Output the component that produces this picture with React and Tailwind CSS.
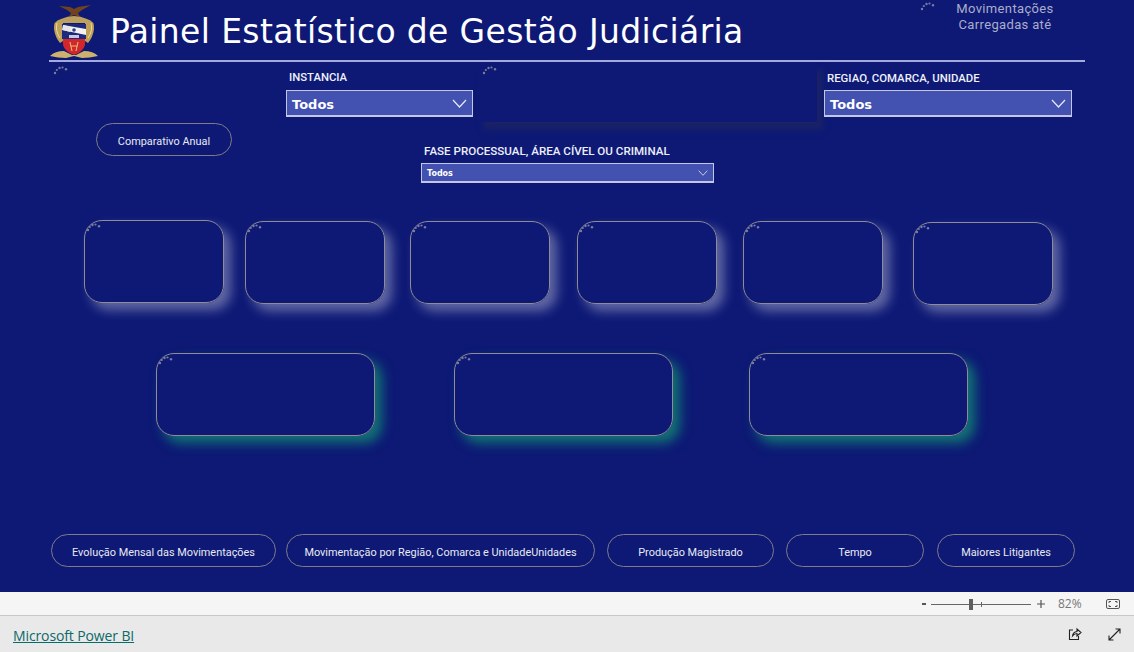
const labelFont = "font-['Roboto',sans-serif]";

function Spinner({ className = "" }) {
  return (
    <svg width="16" height="10" viewBox="0 0 16 10" className={className}>
      <g fill="#7a7c9e">
        <circle cx="2" cy="8" r="1.2" />
        <circle cx="3.8" cy="5" r="1.1" />
        <circle cx="6.5" cy="3" r="1.2" />
        <circle cx="9.5" cy="2.5" r="1.1" />
        <circle cx="13" cy="4.2" r="1.2" />
      </g>
    </svg>
  );
}

function Logo() {
  return (
    <svg width="48" height="54" viewBox="0 0 48 54" className="shrink-0">
      <path d="M9 1 L20 2 L24 4 L28 2 L41 0 L32 5 L28 8 L30 12 L24 10 L19 12 L21 8 L17 5 Z" fill="#70431f" />
      <path d="M11 14 Q24 8 37 14 Q45 16 44 24 Q43 32 38 38 L35 36 L35 18 L13 18 L13 36 L10 38 Q5 32 4 24 Q3 16 11 14 Z" fill="#bda05c" />
      <path d="M7 18 Q5 26 10 33 M41 18 Q43 26 38 33" stroke="#f0d98c" strokeWidth="1" fill="none" />
      <rect x="12" y="19" width="24" height="15" fill="#1d2a7c" />
      <path d="M13 20 L36 24 L36 30 L12 25 Z" fill="#f4f1ee" />
      <path d="M13 20 L20 21.5 L20 27 L13 25 Z" fill="#e8e4e4" />
      <circle cx="24" cy="25" r="1.8" fill="#27408f" />
      <rect x="19" y="30" width="10" height="3" fill="#c7c9e0" />
      <path d="M13 34 H35 V40 Q33 47 24 50 Q15 47 13 40 Z" fill="#d3262c" />
      <path d="M20 37 L22 46 M28 37 L26 46 M21 41 H27" stroke="#e0bd72" strokeWidth="1.1" fill="none" />
      <path d="M0 51 Q5 46 14 46 L22 50 L26 50 L34 46 Q43 46 48 51 Q39 53 32 53 L24 51 L16 53 Q8 53 0 51 Z" fill="#cdb26d" />
    </svg>
  );
}

function Select({ width, height, text, textClass, chevron }) {
  return (
    <div className={`${width} ${height} flex items-center justify-between bg-[#4351b0] border border-[#c3c7e4] border-b-2 pl-[5px] pr-[5px]`}>
      <span className={`${textClass} font-['DejaVu_Sans',sans-serif] font-bold text-white pt-[3px]`}>{text}</span>
      <svg width={chevron} height={chevron * 0.6} viewBox="0 0 15 9" fill="none" stroke="#e6e8f6" strokeWidth="1.2">
        <path d="M1 1 L7.5 8 L14 1" />
      </svg>
    </div>
  );
}

function Card({ width, margin, shadow }) {
  return (
    <div className={`${width} ${margin} ${shadow} h-[83px] shrink-0 rounded-[18px] border border-[#8f8c97] pl-[1px] pt-[1px]`}>
      <Spinner />
    </div>
  );
}

function PillButton({ width, margin = "", children }) {
  return (
    <div className={`${width} ${margin} h-[33px] shrink-0 flex items-center justify-center rounded-full border border-[#7f7c88] pt-[6px] text-[10.9px] text-[#e8e9f4] ${labelFont}`}>
      {children}
    </div>
  );
}

const lightShadow = "shadow-[7px_7px_12px_rgba(205,205,225,0.45)]";
const tealShadow = "shadow-[7px_7px_12px_rgba(20,150,115,0.72)]";

export default function App() {
  return (
    <div className="w-[1134px] h-[652px] overflow-hidden flex flex-col">
      <div className="h-[592px] bg-[#0d1975] flex flex-col shrink-0">
        {/* header */}
        <div className="ml-[49px] w-[1036px] h-[62px] border-b-2 border-[#a4aae0] flex shrink-0">
          <div className="mt-[5px] ml-[1px]"><Logo /></div>
          <h1 className="ml-[12px] mt-[9px] text-[33px] leading-[46px] tracking-[0.35px] text-white font-['DejaVu_Sans',sans-serif] whitespace-nowrap">
            Painel Estatístico de Gestão Judiciária
          </h1>
          <div className="ml-auto flex mr-[30px]">
            <Spinner className="mt-[1px] mr-[19px]" />
            <div className={`w-[100px] text-center text-[13px] leading-[16px] tracking-[0.35px] text-[#abadcc] pt-[1px] ${labelFont}`}>
              Movimentações<br />Carregadas até
            </div>
          </div>
        </div>

        {/* filters */}
        <div className="flex h-[121px] shrink-0">
          <div className="w-[286px] shrink-0 flex flex-col">
            <Spinner className="ml-[53px] mt-[3px]" />
            <div className="ml-[96px] mt-[48px]">
              <PillButton width="w-[136px]">Comparativo Anual</PillButton>
            </div>
          </div>
          <div className="flex flex-col">
            <div className="flex h-[81px]">
              <div className="w-[187px]">
                <div className={`ml-[3px] mt-[8px] h-[20px] pt-[1px] text-[11.3px] leading-[14px] font-medium text-[#eef0fa] ${labelFont}`}>INSTANCIA</div>
                <Select width="w-[187px]" height="h-[27px]" text="Todos" textClass="text-[13px]" chevron={15} />
              </div>
              <div className="ml-[4px] w-[340px] h-[60px] pl-[5px] pt-[3px] shadow-[6px_8px_6px_#1a2268]">
                <Spinner />
              </div>
              <div className="ml-[7px] w-[248px]">
                <div className={`ml-[3px] mt-[8px] h-[20px] pt-[1px] text-[11.4px] leading-[14px] font-medium text-[#eef0fa] whitespace-nowrap ${labelFont}`}>REGIAO, COMARCA, UNIDADE</div>
                <Select width="w-[248px]" height="h-[27px]" text="Todos" textClass="text-[13px]" chevron={15} />
              </div>
            </div>
            <div className="ml-[135px]">
              <div className={`ml-[3px] h-[20px] text-[11.6px] leading-[14px] pt-[1px] font-medium text-[#eef0fa] whitespace-nowrap ${labelFont}`}>FASE PROCESSUAL, ÁREA CÍVEL OU CRIMINAL</div>
              <Select width="w-[293px]" height="h-[20px]" text="Todos" textClass="text-[8px]" chevron={10} />
            </div>
          </div>
        </div>

        {/* cards first row */}
        <div className="flex items-start mt-[37px] h-[133px] shrink-0">
          <Card width="w-[140px]" margin="ml-[84px]" shadow={lightShadow} />
          <Card width="w-[140px]" margin="ml-[21px] mt-[1px]" shadow={lightShadow} />
          <Card width="w-[140px]" margin="ml-[25px] mt-[1px]" shadow={lightShadow} />
          <Card width="w-[140px]" margin="ml-[27px] mt-[1px]" shadow={lightShadow} />
          <Card width="w-[140px]" margin="ml-[26px] mt-[1px]" shadow={lightShadow} />
          <Card width="w-[140px]" margin="ml-[30px] mt-[2px]" shadow={lightShadow} />
        </div>

        {/* cards second row */}
        <div className="flex items-start h-[181px] shrink-0">
          <Card width="w-[219px]" margin="ml-[156px]" shadow={tealShadow} />
          <Card width="w-[219px]" margin="ml-[79px]" shadow={tealShadow} />
          <Card width="w-[219px]" margin="ml-[76px]" shadow={tealShadow} />
        </div>

        {/* navigation */}
        <div className="flex">
          <PillButton width="w-[225px]" margin="ml-[51px]">Evolução Mensal das Movimentações</PillButton>
          <PillButton width="w-[309px]" margin="ml-[10px]">Movimentação por Região, Comarca e UnidadeUnidades</PillButton>
          <PillButton width="w-[167px]" margin="ml-[12px]">Produção Magistrado</PillButton>
          <PillButton width="w-[138px]" margin="ml-[12px]">Tempo</PillButton>
          <PillButton width="w-[138px]" margin="ml-[13px]">Maiores Litigantes</PillButton>
        </div>
      </div>

      {/* zoom bar */}
      <div className="h-[24px] pt-[1px] bg-[#f5f5f5] border-b border-[#c8c8c8] flex items-center shrink-0 font-['Open_Sans',sans-serif] text-[#666]">
        <div className="ml-[922px] w-[4px] h-[2px] bg-[#555]" />
        <div className="ml-[5px] w-[100px] h-[1px] bg-[#666] flex items-center">
          <div className="ml-[38px] w-[4px] h-[11px] bg-[#5f5f5f]" />
          <div className="ml-[8px] w-[1px] h-[5px] bg-[#666]" />
        </div>
        <svg width="8" height="8" viewBox="0 0 8 8" className="ml-[6px]" stroke="#555" strokeWidth="1.2">
          <path d="M0 4 H8 M4 0 V8" />
        </svg>
        <span className="ml-[13px] w-[23px] text-[12px] leading-none text-[#777]">82%</span>
        <svg width="14" height="10" viewBox="0 0 14 10" fill="none" stroke="#555" strokeWidth="1" className="ml-[25px]">
          <rect x="0.5" y="0.5" width="13" height="9" rx="1.5" />
          <path d="M3 4 V2.5 H5 M9 2.5 H11 V4 M11 6 V7.5 H9 M5 7.5 H3 V6" />
        </svg>
      </div>

      {/* footer */}
      <div className="flex-1 bg-[#e9e9e9] flex items-center pt-[2px]">
        <a className="ml-[13px] text-[14px] text-[#0b6a6a] underline font-['Open_Sans',sans-serif] tracking-[-0.12px]">Microsoft Power BI</a>
        <svg width="14" height="14" viewBox="0 0 14 14" fill="none" stroke="#222" strokeWidth="1.1" className="ml-[934px] -mt-[2px]">
          <path d="M5 3 H1.5 V12.5 H10.5 V9" />
          <path d="M4.5 9 Q5 5 9 4.5 V2 L13 5.5 L9 9 V6.5 Q6.5 6.5 4.5 9 Z" />
        </svg>
        <svg width="13" height="13" viewBox="0 0 13 13" fill="none" stroke="#222" strokeWidth="1.1" className="ml-[26px] -mt-[2px]">
          <path d="M1 12 L12 1 M7.5 1 H12 V5.5 M1 7.5 V12 H5.5" />
        </svg>
      </div>
    </div>
  );
}
